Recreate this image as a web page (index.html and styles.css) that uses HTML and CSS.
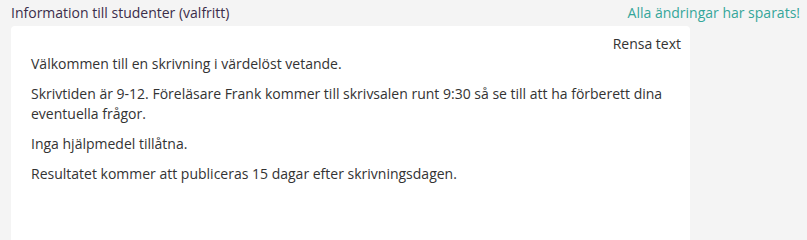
FILE: index.html
```html
<!DOCTYPE html>
<html lang="sv">
<head>
<meta charset="utf-8">
<title>Information till studenter</title>
<link rel="stylesheet" href="styles.css">
</head>
<body>
<div class="field">
  <div class="field-header">
    <label class="field-label">Information till studenter (valfritt)</label>
    <span class="save-status">Alla ändringar har sparats!</span>
  </div>
  <div class="editor">
    <div class="editor-toolbar">
      <button class="clear-btn" type="button">Rensa text</button>
    </div>
    <div class="editor-content">
      <p>Välkommen till en skrivning i värdelöst vetande.</p>
      <p>Skrivtiden är 9-12. Föreläsare Frank kommer till skrivsalen runt 9:30 så se till att ha förberett dina eventuella frågor.</p>
      <p>Inga hjälpmedel tillåtna.</p>
      <p>Resultatet kommer att publiceras 15 dagar efter skrivningsdagen.</p>
    </div>
  </div>
</div>
</body>
</html>
```

FILE: styles.css
```css
html, body {
  margin: 0;
  padding: 0;
  background: #f4f4f4;
}
body {
  font-family: "Open Sans", "Liberation Sans", sans-serif;
  font-size: 14px;
  line-height: 20px;
  color: #333333;
}
.field {
  padding: 3px 7px 0 11px;
}
.field-header {
  display: flex;
  justify-content: space-between;
  align-items: baseline;
  height: 20px;
  margin-bottom: 3px;
}
.field-label {
  color: #3b2d4a;
}
.save-status {
  color: #34a69a;
}
.editor {
  width: 679px;
  min-height: 185px;
  height: calc(100vh - 26px);
  background: #ffffff;
  border-radius: 4px 4px 0 0;
  padding: 8px 0 0 0;
  box-sizing: border-box;
  overflow: hidden;
}
.editor-toolbar {
  display: flex;
  justify-content: flex-end;
  padding-right: 9px;
}
.clear-btn {
  font: inherit;
  color: #333333;
  background: none;
  border: 0;
  padding: 0;
  cursor: pointer;
}
.editor-content {
  padding: 0 20px;
}
.editor-content p {
  margin: 0 0 10px 0;
}
```
